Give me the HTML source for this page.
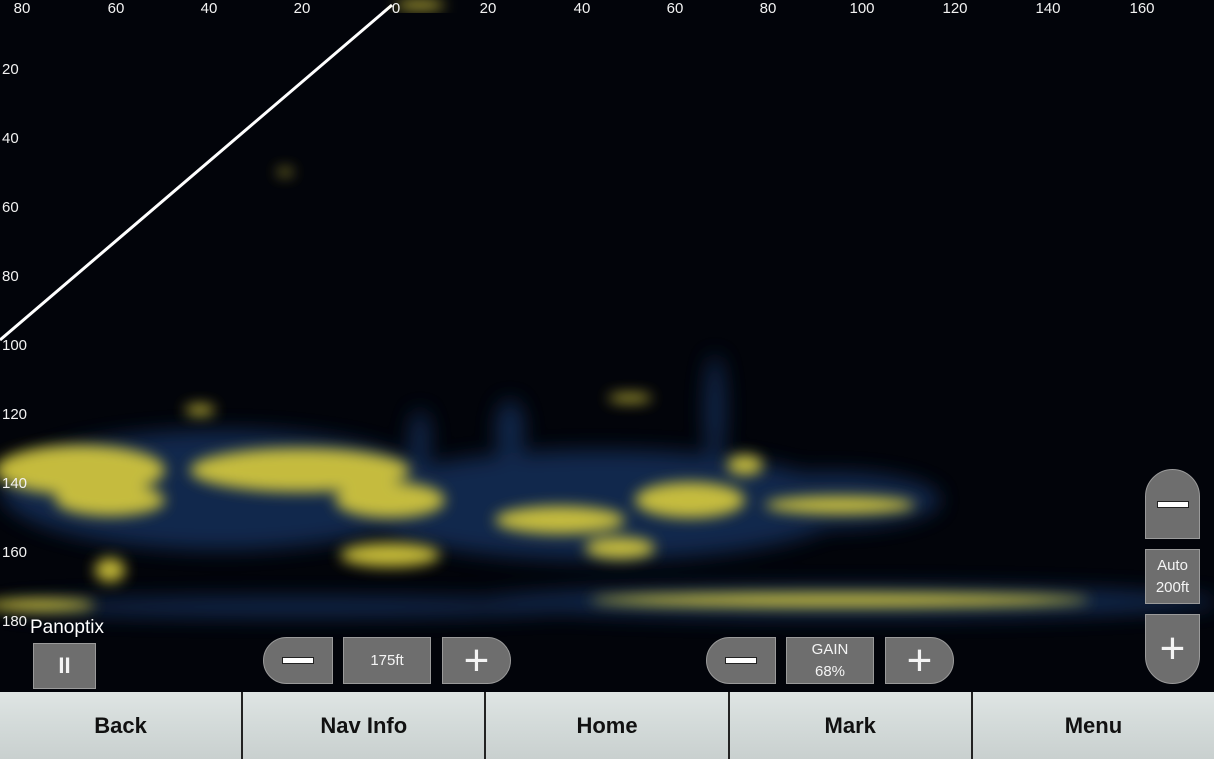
<!DOCTYPE html>
<html><head><meta charset="utf-8"><style>
*{margin:0;padding:0;box-sizing:border-box}
body{width:1214px;height:759px;background:#02040a;position:relative;overflow:hidden;font-family:"Liberation Sans",sans-serif;color:#fff}
.ax{position:absolute;font-size:15px;color:#f2f2f2;transform:translateX(-50%)}
.ay{position:absolute;left:2px;font-size:15px;color:#f2f2f2}
.b{position:absolute;background:#6e6e6e;border:1px solid #9a9a9a;display:flex;align-items:center;justify-content:center;color:#f4f4f4;font-size:15px;text-align:center;line-height:22px}
.bar{position:absolute;left:0;top:692px;width:1214px;height:67px;display:flex;background:#222}
.bar div{flex:1;margin-right:2px;background:linear-gradient(#dfe5e4,#d3dad9 50%,#c9d0cf);display:flex;align-items:center;justify-content:center;font-size:22px;color:#111;font-weight:bold;padding-top:0}
.bar div:last-child{margin-right:0}
.mi{width:32px;height:7px;background:#fff;border:1px solid #222}
</style></head><body>
<svg width="1214" height="692" style="position:absolute;left:0;top:0">
<defs>
<filter id="f" x="-50%" y="-50%" width="200%" height="200%"><feGaussianBlur stdDeviation="10"/></filter>
<filter id="g" x="-50%" y="-50%" width="200%" height="200%"><feGaussianBlur stdDeviation="7"/></filter>
</defs>
<g filter="url(#f)" fill="#1d3f78" opacity="0.6">
<ellipse cx="220" cy="490" rx="220" ry="60"/>
<ellipse cx="600" cy="505" rx="250" ry="55"/>
<ellipse cx="830" cy="500" rx="110" ry="28"/>
<ellipse cx="850" cy="602" rx="370" ry="16"/>
<ellipse cx="300" cy="607" rx="300" ry="10"/>
<ellipse cx="715" cy="410" rx="10" ry="55"/>
<ellipse cx="420" cy="440" rx="10" ry="30"/>
<ellipse cx="510" cy="430" rx="14" ry="30"/>
</g>
<g filter="url(#g)" fill="#d9cc3c" opacity="0.9">
<ellipse cx="80" cy="470" rx="85" ry="25"/>
<ellipse cx="110" cy="500" rx="55" ry="16"/>
<ellipse cx="300" cy="470" rx="110" ry="22"/>
<ellipse cx="390" cy="500" rx="55" ry="18"/>
<ellipse cx="390" cy="555" rx="50" ry="12"/>
<ellipse cx="560" cy="520" rx="65" ry="14"/>
<ellipse cx="690" cy="500" rx="55" ry="18"/>
<ellipse cx="620" cy="548" rx="35" ry="11"/>
<ellipse cx="840" cy="505" rx="75" ry="9"/>
<ellipse cx="745" cy="465" rx="18" ry="10"/>
<ellipse cx="200" cy="410" rx="15" ry="5"/>
<ellipse cx="630" cy="398" rx="22" ry="4"/>
<ellipse cx="110" cy="570" rx="15" ry="12"/>
<ellipse cx="840" cy="600" rx="250" ry="7"/>
<ellipse cx="40" cy="605" rx="55" ry="6"/>
<ellipse cx="285" cy="172" rx="8" ry="3"/>
</g>
<line x1="392" y1="5" x2="0" y2="340" stroke="#fff" stroke-width="3"/>
<ellipse cx="420" cy="5" rx="25" ry="4" fill="#d9cc3c" filter="url(#g)"/>
</svg>
<div class="ax" style="left:22px;top:0">80</div><div class="ax" style="left:116px;top:0">60</div><div class="ax" style="left:209px;top:0">40</div><div class="ax" style="left:302px;top:0">20</div><div class="ax" style="left:396px;top:0">0</div><div class="ax" style="left:488px;top:0">20</div><div class="ax" style="left:582px;top:0">40</div><div class="ax" style="left:675px;top:0">60</div><div class="ax" style="left:768px;top:0">80</div><div class="ax" style="left:862px;top:0">100</div><div class="ax" style="left:955px;top:0">120</div><div class="ax" style="left:1048px;top:0">140</div><div class="ax" style="left:1142px;top:0">160</div>
<div class="ay" style="top:61px">20</div><div class="ay" style="top:130px">40</div><div class="ay" style="top:199px">60</div><div class="ay" style="top:268px">80</div><div class="ay" style="top:337px">100</div><div class="ay" style="top:406px">120</div><div class="ay" style="top:475px">140</div><div class="ay" style="top:544px">160</div><div class="ay" style="top:613px">180</div>
<div style="position:absolute;left:30px;top:617px;font-size:19px">Panoptix</div>
<div class="b" style="left:33px;top:643px;width:63px;height:46px;font-size:22px;font-weight:bold">II</div>
<div class="b" style="left:263px;top:637px;width:70px;height:47px;border-radius:24px 0 0 24px"><div class="mi"></div></div>
<div class="b" style="left:343px;top:637px;width:88px;height:47px">175ft</div>
<div class="b" style="left:442px;top:637px;width:69px;height:47px;border-radius:0 24px 24px 0;font-size:44px">+</div>
<div class="b" style="left:706px;top:637px;width:70px;height:47px;border-radius:24px 0 0 24px"><div class="mi"></div></div>
<div class="b" style="left:786px;top:637px;width:88px;height:47px;flex-direction:column">GAIN<br>68%</div>
<div class="b" style="left:885px;top:637px;width:69px;height:47px;border-radius:0 24px 24px 0;font-size:44px">+</div>
<div class="b" style="left:1145px;top:469px;width:55px;height:70px;border-radius:28px 28px 0 0"><div class="mi"></div></div>
<div class="b" style="left:1145px;top:549px;width:55px;height:55px;flex-direction:column">Auto<br>200ft</div>
<div class="b" style="left:1145px;top:614px;width:55px;height:70px;border-radius:0 0 28px 28px;font-size:44px">+</div>
<div class="bar"><div>Back</div><div>Nav Info</div><div>Home</div><div>Mark</div><div>Menu</div></div>
</body></html>
